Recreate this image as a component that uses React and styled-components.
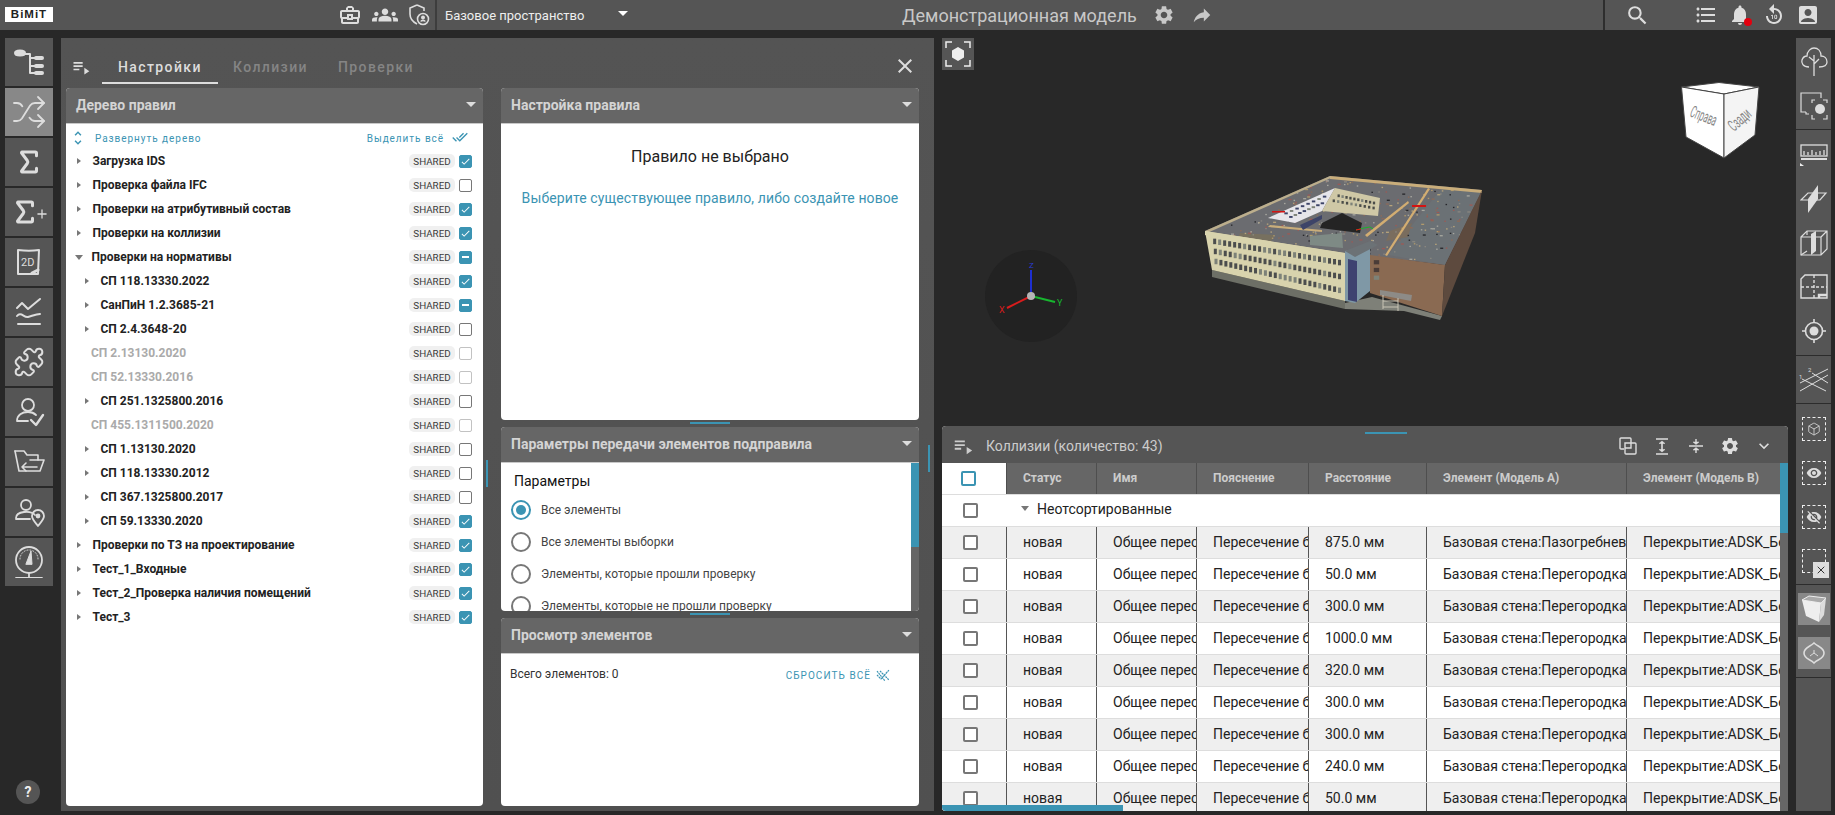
import React from 'react'
import styled, { createGlobalStyle } from 'styled-components'
import {
	MdAccountBox,
	MdCheck,
	MdClose,
	MdDoneAll,
	MdExpandMore,
	MdFormatListBulleted,
	MdGroups,
	MdNotifications,
	MdOutlineBusinessCenter,
	MdPlaylistPlay,
	MdReplay10,
	MdReply,
	MdSearch,
	MdSettings,
	MdUnfoldMore,
	MdVisibility,
	MdVisibilityOff,
} from 'react-icons/md'
import { Box, Puzzle, Shuffle, Sigma, Plus, X } from 'lucide-react'

const BLUE = '#3b94b3'

const GlobalStyle = createGlobalStyle`
	html, body {
		margin: 0;
		height: 100%;
		background: #282828;
		overflow: hidden;
	}
	body {
		font-family: Roboto, "Noto Sans", sans-serif;
	}
	* {
		box-sizing: border-box;
	}
`

const Page = styled.div`
	width: 1835px;
	height: 815px;
	display: flex;
	flex-direction: column;
	background: #282828;
`

const TopBar = styled.header`
	height: 30px;
	flex: none;
	display: flex;
	background: #555;
	color: #ddd;
`

const LogoSection = styled.div`
	width: 435px;
	display: flex;
	align-items: center;
	padding: 0 5px;
`

const Logo = styled.div`
	width: 48px;
	height: 15px;
	margin-top: -2px;
	background: #fff;
	color: #222;
	font: bold 11.5px/15px 'Liberation Sans', sans-serif;
	letter-spacing: 1px;
	text-align: center;
`

const TopIcons = styled.div`
	display: flex;
	align-items: center;
	margin-left: auto;
	gap: 10px;
	color: #ddd;
`

const SelectBox = styled.div`
	width: 198px;
	border-left: 2px solid #3d3d3d;
	padding: 0 5px 0 8px;
	display: flex;
	align-items: center;
	justify-content: space-between;
	font-size: 13px;
	color: #eee;
`

const Caret = styled.span`
	width: 0;
	height: 0;
	border-left: 5px solid transparent;
	border-right: 5px solid transparent;
	border-top: 5px solid ${(p) => p.$color || '#ddd'};
	margin-top: ${(p) => p.$top || 0}px;
`

const TitleSection = styled.div`
	flex: 1;
	display: flex;
	align-items: center;
	padding-left: 269px;
	font-size: 18px;
	color: #c8c8c8;
	gap: 16px;
	border-right: 2px solid #2e2e2e;
`

const RightSection = styled.div`
	width: 230px;
	padding: 0 15px 0 20px;
	display: flex;
	align-items: center;
`

const FlipReply = styled(MdReply)`
	transform: scaleX(-1);
`

const BellWrap = styled.div`
	position: relative;
	display: flex;
`

const Dot = styled.span`
	position: absolute;
	right: 0;
	bottom: 1px;
	width: 8px;
	height: 8px;
	border-radius: 50%;
	background: #e3000f;
`

const Body = styled.div`
	flex: 1;
	min-height: 0;
	display: flex;
	padding: 8px 4px 4px 5px;
`

const LeftRail = styled.nav`
	width: 48px;
	flex: none;
	display: flex;
	flex-direction: column;
	gap: 2px;
	margin-right: 8px;
	position: relative;
`

const RailButton = styled.div`
	width: 48px;
	height: 48px;
	display: flex;
	align-items: center;
	justify-content: center;
	background: ${(p) => (p.$active ? '#888' : '#555')};
	color: #ddd;
`

const HelpButton = styled.div`
	margin: auto 0 7px 11px;
	width: 24px;
	height: 24px;
	border-radius: 50%;
	background: #555;
	color: #eee;
	font-size: 14px;
	font-weight: 700;
	line-height: 24px;
	text-align: center;
`

const MainPanel = styled.section`
	width: 873px;
	flex: none;
	height: 773px;
	display: flex;
	flex-direction: column;
	background: linear-gradient(#545454, #505050);
	position: relative;
`

const TabBar = styled.div`
	height: 50px;
	flex: none;
	display: flex;
	align-items: flex-start;
	padding: 13px 17px 0 9px;
	color: #ddd;
`

const Tab = styled.div`
	height: 33px;
	padding: 8px ${(p) => (p.$active ? 16 : 15)}px 0;
	font-size: 14px;
	font-weight: 500;
	letter-spacing: 1.4px;
	color: ${(p) => (p.$active ? '#ddd' : '#858585')};
	border-bottom: 2px solid ${(p) => (p.$active ? '#ddd' : 'transparent')};
`

const TabIcon = styled.div`
	width: 32px;
	padding: 6px 0 0 1px;
	display: flex;
`

const CloseIcon = styled.div`
	margin-left: auto;
	padding-top: 3px;
	display: flex;
`

const Columns = styled.div`
	flex: 1;
	min-height: 0;
	display: flex;
	gap: 18px;
	padding: 0 15px 5px 5px;
`

const Column = styled.div`
	width: ${(p) => p.$width}px;
	display: flex;
	flex-direction: column;
	gap: 7px;
`

const Card = styled.div`
	height: ${(p) => (p.$height ? `${p.$height}px` : '100%')};
	flex: none;
	display: flex;
	flex-direction: column;
	position: relative;
	background: #fff;
	border-radius: 4px;
`

const CardHeader = styled.div`
	height: 36px;
	flex: none;
	display: flex;
	align-items: center;
	justify-content: space-between;
	padding: 0 7px 2px 10px;
	background: #666;
	border-bottom: 1px solid #c8c8c8;
	border-radius: 4px 4px 0 0;
	color: #d4d4d4;
	font-size: 14px;
	font-weight: 700;
`

const CardBody = styled.div`
	flex: 1;
	min-height: 0;
	overflow: hidden;
	position: relative;
	border-radius: 0 0 4px 4px;
`

const HandleH = styled.div`
	position: absolute;
	left: ${(p) => p.$left}px;
	${(p) => (p.$bottom !== undefined ? `bottom: ${p.$bottom}px;` : `top: ${p.$top}px;`)}
	width: ${(p) => p.$width || 40}px;
	height: 2px;
	background: ${BLUE};
`

const HandleV = styled.div`
	position: absolute;
	left: ${(p) => p.$left}px;
	top: ${(p) => p.$top}px;
	width: 1.5px;
	height: 27px;
	background: ${BLUE};
`

const TreeToolbar = styled.div`
	height: 22px;
	margin-top: 3px;
	display: flex;
	align-items: center;
	padding: 0 15px 0 3px;
	color: ${BLUE};
	font-size: 10px;
	letter-spacing: 0.95px;
`

const ToolLabel = styled.span`
	margin-left: ${(p) => p.$left || 0}px;
`

const Spacer = styled.span`
	flex: 1;
`

const TreeRow = styled.div`
	height: 24px;
	display: flex;
	align-items: center;
	padding-right: 11px;
	padding-left: ${(p) => (p.$level ? 18 : 10)}px;
`

const Arrow = styled.span`
	width: 0;
	height: 0;
	margin-right: 11px;
	margin-left: 1px;
	${(p) =>
		p.$open
			? `border-left: 4.5px solid transparent; border-right: 4.5px solid transparent; border-top: 5px solid #777; margin-left: -1px; margin-right: 8px;`
			: `border-top: 3.5px solid transparent; border-bottom: 3.5px solid transparent; border-left: 4px solid #777;`}
`

const TreeLabel = styled.span`
	font-size: 12px;
	font-weight: 700;
	color: ${(p) => (p.$disabled ? '#aaa' : '#222')};
	margin-left: ${(p) => (p.$disabled ? 7 : 0.5)}px;
`

const SharedChip = styled.span`
	width: 46px;
	height: 14px;
	margin-left: auto;
	margin-right: 4px;
	background: #f0f0f0;
	border-radius: 5px;
	color: #3a3a3a;
	font-size: 9.8px;
	line-height: 15px;
	text-align: center;
`

const CheckBox = styled.span`
	width: ${(p) => p.$size || 13}px;
	height: ${(p) => p.$size || 13}px;
	flex: none;
	display: inline-flex;
	align-items: center;
	justify-content: center;
	border-radius: 2px;
	color: #fff;
	background: ${(p) => (p.$state ? BLUE : '#fff')};
	border: ${(p) => p.$border || 1.5}px solid
		${(p) => {
			if (p.$state || p.$blue) return BLUE
			return p.$disabled ? '#c2c2c2' : '#777'
		}};
`

const MinusBar = styled.span`
	width: 7px;
	height: 1.5px;
	background: #fff;
`

const EmptyTitle = styled.div`
	margin-top: 23px;
	text-align: center;
	font-size: 16px;
	color: #222;
`

const EmptyHint = styled.div`
	margin-top: 24px;
	text-align: center;
	font-size: 14px;
	letter-spacing: 0.11px;
	color: ${BLUE};
`

const Scrollbar = styled.div`
	position: absolute;
	top: 0;
	right: 0;
	bottom: 0;
	width: 8px;
	background: #666;
`

const ScrollThumb = styled.div`
	height: ${(p) => p.$height}px;
	background: ${BLUE};
`

const ParamsTitle = styled.div`
	padding: 10px 0 0 13px;
	font-size: 14px;
	color: #111;
	height: 31px;
`

const RadioRow = styled.div`
	height: 32px;
	display: flex;
	align-items: center;
	padding-left: 10px;
	font-size: 12px;
	color: #444;
	gap: 10px;
`

const Radio = styled.span`
	width: 20px;
	height: 20px;
	flex: none;
	display: flex;
	align-items: center;
	justify-content: center;
	border-radius: 50%;
	border: 2px solid ${(p) => (p.$checked ? BLUE : '#777')};
	&::after {
		content: '';
		width: 10px;
		height: 10px;
		border-radius: 50%;
		background: ${(p) => (p.$checked ? BLUE : 'transparent')};
	}
`

const TotalRow = styled.div`
	display: flex;
	align-items: center;
	justify-content: space-between;
	padding: 12px 28px 0 9px;
	font-size: 12px;
	color: #333;
`

const ResetButton = styled.div`
	display: flex;
	align-items: center;
	gap: 5px;
	margin-top: 2px;
	color: ${BLUE};
	font-size: 10px;
	letter-spacing: 1.05px;
`

const Workspace = styled.div`
	flex: 1;
	min-width: 0;
	display: flex;
	flex-direction: column;
	padding: 0 8px;
`

const Viewport = styled.div`
	height: 388px;
	flex: none;
	position: relative;
`

const FitButton = styled.div`
	position: absolute;
	left: 0;
	top: 0;
	width: 32px;
	height: 32px;
	background: #555;
	display: flex;
	align-items: center;
	justify-content: center;
`

const Drawing = styled.svg`
	position: absolute;
	left: ${(p) => p.$x}px;
	top: ${(p) => p.$y}px;
`

const TablePanel = styled.section`
	height: 385px;
	flex: none;
	width: 846px;
	display: flex;
	flex-direction: column;
	position: relative;
	overflow: hidden;
	border-radius: 4px 4px 0 4px;
	background: #fff;
`

const TableHeader = styled.div`
	height: 37px;
	flex: none;
	display: flex;
	align-items: center;
	padding: 3px 7px 0 10px;
	background: #555;
	color: #ccc;
	font-size: 14px;
	gap: 6px;
`

const HeaderIcons = styled.div`
	margin-left: auto;
	display: flex;
	align-items: center;
	color: #ddd;
`

const IconSlot = styled.div`
	width: 34px;
	display: flex;
	justify-content: center;
`

const GridRow = styled.div`
	height: ${(p) => p.$height || 32}px;
	flex: none;
	display: grid;
	grid-template-columns: 64px 90px 100px 112px 118px 200px 154px;
	width: 838px;
	border-bottom: 1px solid #ddd;
	background: ${(p) => (p.$shade ? '#efefef' : '#fff')};
`

const CheckCell = styled.div`
	display: flex;
	align-items: center;
	padding-left: ${(p) => p.$left || 21}px;
	background: ${(p) => (p.$shade ? '#efefef' : '#fff')};
`

const HeadCell = styled.div`
	background: #666;
	color: #ccc;
	font-size: 12px;
	font-weight: 700;
	line-height: 31px;
	padding-left: 16px;
	border-left: 1px solid #4e4e4e;
	white-space: nowrap;
	overflow: hidden;
`

const Cell = styled.div`
	font-size: 14px;
	line-height: 30px;
	color: #222;
	padding-left: 16px;
	border-left: 1px solid #555;
	white-space: nowrap;
	overflow: hidden;
`

const GroupCell = styled.div`
	grid-column: 2 / -1;
	display: flex;
	align-items: center;
	padding: 0 0 4px 16px;
	font-size: 14px;
	color: #222;
`

const TableScrollV = styled.div`
	position: absolute;
	top: 37px;
	right: 0;
	bottom: 0;
	width: 8px;
	background: #666;
`

const TableScrollH = styled.div`
	position: absolute;
	left: 0;
	bottom: 0;
	width: 181px;
	height: 6px;
	background: ${BLUE};
`

const RightRail = styled.aside`
	width: 35px;
	flex: none;
	height: 773px;
	display: flex;
	flex-direction: column;
	gap: 1px;
	background: #2c2c2c;
`

const RailGroup = styled.div`
	height: ${(p) => p.$height}px;
	flex: ${(p) => (p.$grow ? 1 : 'none')};
	background: #555;
	display: flex;
	flex-direction: column;
	align-items: center;
	padding-top: ${(p) => p.$top || 0}px;
	gap: ${(p) => p.$gap || 0}px;
	color: #ddd;
`

const RailIcon = styled.div`
	width: 32px;
	height: ${(p) => p.$height || 44}px;
	flex: none;
	display: flex;
	align-items: center;
	justify-content: center;
	position: relative;
	background: ${(p) => (p.$active ? '#888' : 'transparent')};
`

const DashedBox = styled.div`
	width: 24px;
	height: 24px;
	border: 1px dashed #eee;
	display: flex;
	align-items: center;
	justify-content: center;
`

const CornerX = styled.div`
	position: absolute;
	right: 1px;
	bottom: 5px;
	width: 16px;
	height: 16px;
	background: #ddd;
	color: #333;
	display: flex;
	align-items: center;
	justify-content: center;
`

const PlusIcon = styled(Plus)`
	margin-left: -5px;
	margin-top: 3px;
`

const TREE = [
	{ name: 'Загрузка IDS', check: 'on' },
	{ name: 'Проверка файла IFC' },
	{ name: 'Проверки на атрибутивный состав', check: 'on' },
	{ name: 'Проверки на коллизии', check: 'on' },
	{ name: 'Проверки на нормативы', check: 'mixed', open: true },
	{ name: 'СП 118.13330.2022', check: 'on', level: 1 },
	{ name: 'СанПиН 1.2.3685-21', check: 'mixed', level: 1 },
	{ name: 'СП 2.4.3648-20', level: 1 },
	{ name: 'СП 2.13130.2020', level: 1, disabled: true },
	{ name: 'СП 52.13330.2016', level: 1, disabled: true },
	{ name: 'СП 251.1325800.2016', level: 1 },
	{ name: 'СП 455.1311500.2020', level: 1, disabled: true },
	{ name: 'СП 1.13130.2020', level: 1 },
	{ name: 'СП 118.13330.2012', level: 1 },
	{ name: 'СП 367.1325800.2017', level: 1 },
	{ name: 'СП 59.13330.2020', check: 'on', level: 1 },
	{ name: 'Проверки по ТЗ на проектирование', check: 'on' },
	{ name: 'Тест_1_Входные', check: 'on' },
	{ name: 'Тест_2_Проверка наличия помещений', check: 'on' },
	{ name: 'Тест_3', check: 'on' },
]

const RADIOS = [
	'Все элементы',
	'Все элементы выборки',
	'Элементы, которые прошли проверку',
	'Элементы, которые не прошли проверку',
]

const DISTANCES = ['875.0', '50.0', '300.0', '1000.0', '320.0', '300.0', '300.0', '240.0', '50.0']

const COLUMNS = ['Статус', 'Имя', 'Пояснение', 'Расстояние', 'Элемент (Модель А)', 'Элемент (Модель В)']

const Stroke = ({ size = 32, view = 32, width = 2, children }) => (
	<svg
		width={size}
		height={size}
		viewBox={`0 0 ${view} ${view}`}
		fill='none'
		stroke='currentColor'
		strokeWidth={width}
		strokeLinecap='round'
		strokeLinejoin='round'>
		{children}
	</svg>
)

const ShieldUserIcon = () => (
	<svg width='22' height='24' viewBox='0 0 22 24' fill='none' stroke='#ddd' strokeWidth='1.6'>
		<path d='M9 2 L2 5 V11 C2 16 5 19 9 21' />
		<path d='M9 2 L16 5 V8' />
		<circle cx='15' cy='16' r='5.5' />
		<circle cx='15' cy='14.5' r='1.2' fill='#ddd' />
		<path d='M12.8 18.5 C13.5 17 16.5 17 17.2 18.5' />
	</svg>
)

const TreeIcon = () => (
	<Stroke>
		<ellipse cx='7' cy='7' rx='5' ry='2.5' fill='currentColor' />
		<path d='M11 8 H17 V27 M17 12 H22 M17 20 H22 M17 27 H22' />
		<path d='M23 12 H29 M23 20 H29 M23 27 H29' strokeWidth='4' />
	</Stroke>
)

const PlanIcon = () => (
	<Stroke>
		<path d='M5 4 C12 5 20 5 26 4 L25 28 H5 Z' />
		<path d='M19 27 L25 24' strokeWidth='3' />
		<text
			x='8'
			y='20'
			fontSize='11'
			fontFamily='Roboto'
			fill='currentColor'
			stroke='none'>
			2D
		</text>
	</Stroke>
)

const TrendIcon = () => (
	<Stroke>
		<path d='M4 12 L9 7 L15 13 L27 3' />
		<path d='M4 20 C8 15 11 22 15 21 C19 20 23 18 27 18' />
		<path d='M5 28 H27' />
	</Stroke>
)

const UserCheckIcon = () => (
	<Stroke width={1.8}>
		<circle cx='15' cy='9' r='6' />
		<path d='M4 25 C4 19 9 16 15 16 C18 16 21 17 23 19 M4 25 H15' />
		<path d='M18 24 L23 29 L30 19' strokeWidth='2.4' />
	</Stroke>
)

const FolderBackIcon = () => (
	<Stroke width={1.6}>
		<path d='M2 5 H11 L14 9 H25 V14' />
		<path d='M2 5 L6 25 H27 L31 14 H17' />
		<path d='M13 17 L9 21 L13 25 M9 21 H24' />
	</Stroke>
)

const UserPinIcon = () => (
	<Stroke width={1.8}>
		<circle cx='13' cy='9' r='5' />
		<path d='M3 22 C3 15 18 14 22 19 M3 23 H17' />
		<path d='M25 30 C21 25 19 23 19 20 A6 6 0 0 1 31 20 C31 23 29 25 25 30 Z' />
		<circle cx='25' cy='20' r='1.5' fill='currentColor' />
	</Stroke>
)

const GaugeIcon = () => (
	<Stroke width={1.8}>
		<circle cx='16' cy='14' r='13' />
		<path d='M16 27 V31 M3 32 H29' />
		<path d='M13 18 L18 5 L19 18 Z' fill='currentColor' strokeWidth='1' />
		<path d='M7 13 A9 9 0 0 1 25 13' strokeWidth='1' strokeDasharray='1 2' />
	</Stroke>
)

const SigmaPlus = () => (
	<>
		<Sigma size={30} strokeWidth={2.4} />
		<PlusIcon size={14} strokeWidth={2.2} />
	</>
)

const RAIL = [
	{ icon: <TreeIcon /> },
	{ icon: <Shuffle size={36} strokeWidth={1.2} />, active: true },
	{ icon: <Sigma size={30} strokeWidth={2.4} /> },
	{ icon: <SigmaPlus /> },
	{ icon: <PlanIcon /> },
	{ icon: <TrendIcon /> },
	{ icon: <Puzzle size={32} strokeWidth={1.5} /> },
	{ icon: <UserCheckIcon /> },
	{ icon: <FolderBackIcon /> },
	{ icon: <UserPinIcon /> },
	{ icon: <GaugeIcon /> },
]

const FitIcon = ({ size = 26 }) => (
	<svg width={size} height={size} viewBox='0 0 26 26' fill='none' stroke='#eee' strokeWidth='1.5'>
		<path d='M1 7 V1 H7 M19 1 H25 V7 M25 19 V25 H19 M7 25 H1 V19' />
		<polygon points='13,6 19,9.5 19,16.5 13,20 7,16.5 7,9.5' fill='#eee' stroke='none' />
	</svg>
)

const lerp = (a, b, t) => a + (b - a) * t

// pseudo random so that the noise on the model is the same on every render
const rnd = (i) => {
	const x = Math.sin(i * 12.9898) * 43758.5453
	return x - Math.floor(x)
}

const insidePoly = (x, y, poly) => {
	let inside = false
	for (let i = 0, j = poly.length - 1; i < poly.length; j = i++) {
		const [xi, yi] = poly[i]
		const [xj, yj] = poly[j]
		if (yi > y !== yj > y && x < ((xj - xi) * (y - yi)) / (yj - yi) + xi) inside = !inside
	}
	return inside
}

const windowRows = (tl, tr, bl, br, rows, cols, color) => {
	const out = []
	for (let r = 0; r < rows; r++) {
		for (let c = 0; c < cols; c++) {
			const u = (c + 0.2) / cols
			const v = (r + 0.25) / rows
			const x = lerp(lerp(tl[0], tr[0], u), lerp(bl[0], br[0], u), v)
			const y = lerp(lerp(tl[1], tr[1], u), lerp(bl[1], br[1], u), v)
			out.push(
				<rect
					key={`${r}-${c}-${x}`}
					x={x}
					y={y}
					width={0.6 * ((tr[0] - tl[0]) / cols)}
					height={0.55 * ((bl[1] - tl[1]) / rows)}
					fill={rnd(r * 40 + c) > 0.6 ? '#7d8278' : color}
				/>,
			)
		}
	}
	return out
}

const ROOF = [
	[7, 58],
	[130, 5],
	[280, 19],
	[245, 90],
	[145, 78],
]

const COURT = [
	[122, 50],
	[142, 40],
	[162, 50],
	[160, 60],
	[120, 55],
]

const SPECK_COLORS = ['#9c5a55', '#8a8780', '#b09a6c', '#8d6a58', '#26262a', '#a8a8a0', '#b8a47a']

const ROOF_SPECKS = Array.from({ length: 520 }, (_, i) => ({
	x: rnd(i) * 290,
	y: rnd(i + 1500) * 100,
	c: SPECK_COLORS[i % SPECK_COLORS.length],
})).filter((s) => insidePoly(s.x, s.y, ROOF) && !insidePoly(s.x, s.y, COURT))

const BuildingModel = () => (
	<Drawing $x={258} $y={135} width='292' height='152' viewBox='0 0 292 152'>
		{/* base */}
		<polygon points='12,97 145,128 145,136 12,104' fill='#6d6f66' />
		<polygon points='145,130 172,124 242,143 240,147 204,138 145,136' fill='#7e8078' />
		{/* roof */}
		<polygon points='5,58 130,3 282,17 245,92 145,80' fill='#6b6c70' />
		<polygon points='188,82 245,92 282,18 242,15' fill='#6b7175' />
		<polygon points='40,60 75,62 70,70 38,66' fill='#77705f' />
		<polygon points='190,58 212,50 208,64 186,68' fill='#7a6d5e' />
		{/* roof details */}
		{ROOF_SPECKS.map((s, i) => (
			<rect key={i} x={s.x} y={s.y} width={i % 4 === 0 ? 3 : 1.5} height='1.3' fill={s.c} />
		))}
		<polygon points='130,3 282,17 282,20 130,6' fill='#c9ad7a' />
		<polygon points='5,58 130,3 131,5 7,60' fill='#bcae8c' />
		<polygon points='5,58 145,80 145,84 5,62' fill='#e0d9b6' />
		<polygon points='185,82 228,15 230,16 187,83' fill='#d2ad72' />
		<polygon points='165,62 208,28 209,30 167,64' fill='#d2ad72' />
		<polygon points='70,52 122,57 122,59 68,54' fill='#c9ad7a' />
		{/* inner walls and courtyard */}
		<polygon points='68,45 135,15 122,38 95,50' fill='#e6e5ea' />
		{windowRows([82, 39], [128, 19], [92, 46], [122, 33], 2, 8, '#3d4468')}
		<polygon points='100,52 122,42 122,46 103,57' fill='#3d4468' />
		<polygon points='135,15 180,25 178,43 122,38' fill='#cfc8a6' />
		{windowRows([138, 20], [176, 28], [128, 30], [176, 38], 2, 10, '#4a4c48')}
		<polygon points='122,50 142,40 162,50 160,60 120,55' fill='#242424' />
		<path d='M156 57 L164 55 M164 55 L170 54 L173 56' stroke='#18b52c' strokeWidth='1' fill='none' />
		<path d='M156 57 L161 56' stroke='#e11' strokeWidth='1' fill='none' />
		<polygon points='110,63 142,60 143,75 110,72' fill='#7e8a85' />
		<rect x='72' y='38' width='13' height='1.5' fill='#d31313' />
		<rect x='212' y='32' width='14' height='2' fill='#d31313' />
		{/* front facade */}
		<polygon points='5,58 145,80 145,128 12,97' fill='#d8d3ad' />
		{windowRows([12, 63], [142, 84], [14, 93], [142, 126], 3, 26, '#4b4d4d')}
		{/* stair tower */}
		<polygon points='145,78 170,72 170,118 155,130 145,128' fill='#7f98a6' />
		<polygon points='148,86 157,88 157,129 148,127' fill='#3e4270' />
		<polygon points='145,78 170,68 178,72 155,84' fill='#6c7276' />
		{/* brick wing */}
		<polygon points='170,82 245,92 242,143 170,120' fill='#8a6a52' />
		{windowRows([172, 85], [181, 86], [172, 108], [181, 110], 3, 1, '#4a3c38')}
		<polygon points='180,117 212,122 211,128 180,122' fill='#8d8b87' />
		<path d='M183 122 V136 M198 125 V138 M183 128 H198 M183 134 H198' stroke='#c8c4b4' strokeWidth='1' />
		<polygon points='245,92 282,17 275,60 242,143' fill='#5d4a3e' />
	</Drawing>
)

const AxisGizmo = () => (
	<Drawing $x={43} $y={212} width='92' height='92' viewBox='0 0 92 92'>
		<circle cx='46' cy='46' r='46' fill='#222' />
		<path d='M46 46 V20' stroke='#1e2fd0' strokeWidth='2' />
		<path d='M46 46 L22 58' stroke='#d91c1c' strokeWidth='2' />
		<path d='M46 46 L70 52' stroke='#17b52f' strokeWidth='2' />
		<circle cx='46' cy='46' r='4' fill='#b5b5b5' />
		<text x='44' y='18' fontSize='8' fill='#2a3bd8' fontFamily='Roboto'>Z</text>
		<text x='14' y='63' fontSize='9' fill='#d91c1c' fontFamily='Roboto'>X</text>
		<text x='72' y='56' fontSize='9' fill='#17b52f' fontFamily='Roboto'>Y</text>
	</Drawing>
)

const ViewCube = () => (
	<Drawing $x={739} $y={44} width='80' height='80' viewBox='0 0 80 80'>
		<polygon points='0.5,5 43,12 78,5 38,0.5' fill='#fff' stroke='#444' strokeWidth='1' />
		<polygon points='0.5,5 43,12 43,76 5,55' fill='#fff' stroke='#444' strokeWidth='1' />
		<polygon points='43,12 78,5 74,53 43,76' fill='#f4f4f4' stroke='#444' strokeWidth='1' />
		<text
			x='0'
			y='0'
			fontSize='11'
			fill='#888'
			fontFamily='Roboto'
			transform='translate(8 34) rotate(22) scale(0.72 1.5)'>
			Справа
		</text>
		<text
			x='0'
			y='0'
			fontSize='11'
			fill='#888'
			fontFamily='Roboto'
			transform='translate(53 50) rotate(-42) scale(0.78 1.5)'>
			Сзади
		</text>
	</Drawing>
)

const RailTreeIcon = () => (
	<svg width='28' height='30' viewBox='0 0 28 30' fill='none' stroke='#ddd' strokeWidth='1.3'>
		<path d='M9 20 C3 20 1 16 2 13 C3 10 5 9 7 9 C7 4 11 1 14 1 C18 1 21 4 21 9 C24 9 27 11 27 15 C27 18 24 20 19 20' />
		<path d='M14 8 V29 M14 14 L9 10 M14 17 L19 12' />
	</svg>
)

const SnapshotIcon = () => (
	<svg width='28' height='28' viewBox='0 0 28 28' fill='none' stroke='#ddd' strokeWidth='1.2'>
		<path d='M6 20 H1 V1 H21 V6' />
		<path d='M6 20 V22 H9' />
		<path d='M12 11 V8 H15 M23 8 H27 V11 M27 23 V27 H23 M15 27 H12 V23' />
		<circle cx='20' cy='17' r='5' fill='#ddd' stroke='none' />
	</svg>
)

const RulerIcon = () => (
	<svg width='28' height='22' viewBox='0 0 28 22' fill='none' stroke='#ddd' strokeWidth='1.3'>
		<rect x='1' y='1' width='26' height='11' />
		<path d='M4 11 V7 M8 11 V8 M12 11 V6 M16 11 V8 M20 11 V7 M24 11 V6' />
		<path d='M1 15 H27' strokeWidth='2' />
		<polygon points='0,19 4,22 0,22' fill='#eee' stroke='none' />
	</svg>
)

const PlaneIcon = () => (
	<svg width='28' height='30' viewBox='0 0 28 30' fill='none' stroke='#ddd' strokeWidth='1.2'>
		<polygon points='18,1 18,15 8,15' fill='#ddd' stroke='none' />
		<polygon points='8,15 18,15 8,29' fill='#ddd' stroke='none' />
		<path d='M1 16 L8 9 H26 L20 16 Z' />
	</svg>
)

const SectionBoxIcon = () => (
	<svg width='28' height='26' viewBox='0 0 28 26' fill='none' stroke='#ddd' strokeWidth='1.2'>
		<path d='M1 7 L7 1 H27 V19 L21 25 H1 Z M1 7 H21 V25 M21 7 L27 1' />
		<path d='M7 1 V5 M7 21 L1 25' />
		<polygon points='11,4 16,1 16,21 11,25' fill='#ddd' stroke='none' />
	</svg>
)

const FloorIcon = () => (
	<svg width='28' height='26' viewBox='0 0 28 26' fill='none' stroke='#ddd' strokeWidth='1.4'>
		<path d='M1 5 L5 1 H27 V24 H1 Z' />
		<path d='M14 1 V24 M1 13 H27' strokeDasharray='3 2' />
		<path d='M19 24 V21 H27' strokeWidth='2.4' />
	</svg>
)

const TargetIcon = () => (
	<svg width='24' height='24' viewBox='0 0 24 24' fill='none' stroke='#ddd' strokeWidth='1.6'>
		<circle cx='12' cy='12' r='8.5' />
		<circle cx='12' cy='12' r='4.5' fill='#ddd' stroke='none' />
		<path d='M12 0 V3 M12 21 V24 M0 12 H3 M21 12 H24' />
	</svg>
)

const GridIcon = () => (
	<svg width='32' height='30' viewBox='0 0 32 30' fill='none' stroke='#ddd' strokeWidth='1'>
		<path d='M2 26 L30 10 M2 18 L30 4 M4 14 L28 26 M14 8 L30 18' />
		<text x='1' y='14' fontSize='6' fill='#ddd' stroke='none' fontFamily='Roboto'>1</text>
		<text x='10' y='7' fontSize='6' fill='#ddd' stroke='none' fontFamily='Roboto'>2</text>
	</svg>
)

const SolidCubeIcon = () => (
	<svg width='26' height='28' viewBox='0 0 26 28' fill='none'>
		<polygon points='1,5 8,1 25,3 20,8' fill='#aaa' stroke='#eee' strokeWidth='1' />
		<polygon points='1,5 20,8 18,27 5,21' fill='#eee' />
		<polygon points='20,8 25,3 23,20 18,27' fill='#ddd' />
	</svg>
)

const OrbitIcon = () => (
	<svg width='24' height='24' viewBox='0 0 24 24' fill='none' stroke='#ddd' strokeWidth='1.6'>
		<path d='M2 12 C2 6 8 6 12 2 C16 6 22 6 22 12 C22 18 16 18 12 22 C8 18 2 18 2 12 Z' />
		<path d='M12 12 V9 M12 12 L8 15 M12 12 L16 15' strokeWidth='1' />
	</svg>
)

const SwapIcon = () => (
	<svg width='18' height='18' viewBox='0 0 18 18' fill='none' stroke='#ddd' strokeWidth='1.4'>
		<path d='M5 12 H2 Q1 12 1 11 V2 Q1 1 2 1 H11 Q12 1 12 2 V6' />
		<path d='M6 6 H16 Q17 6 17 7 V16 Q17 17 16 17 H7 Q6 17 6 16 Z M6 11 H12 V6' />
	</svg>
)

const CollapseIcon = () => (
	<svg width='16' height='16' viewBox='0 0 16 16' fill='#ddd' stroke='#ddd'>
		<path d='M1 8 H15' strokeWidth='1.6' />
		<path d='M8 1 V4 M8 12 V15' strokeWidth='1.4' />
		<path d='M5 4 H11 L8 6.5 Z M5 12 H11 L8 9.5 Z' strokeWidth='0.5' />
	</svg>
)

const ExpandRowsIcon = () => (
	<svg width='16' height='17' viewBox='0 0 16 17' fill='#ddd' stroke='#ddd'>
		<path d='M2 1 H14 M2 16 H14' strokeWidth='1.6' />
		<path d='M8 4 V13' strokeWidth='1.6' />
		<path d='M5 5.5 L8 3 L11 5.5 Z M5 11.5 L8 14 L11 11.5 Z' strokeWidth='0.5' />
	</svg>
)

const ClearAllIcon = () => (
	<svg width='15' height='14' viewBox='0 0 15 14' fill='none' stroke={BLUE} strokeWidth='1.2'>
		<path d='M1 7 L5 11 L13 2 M4 3 L13 12 M1 3 L9 13' strokeDasharray='2 0.6' />
	</svg>
)

const Rule = ({ item }) => (
	<TreeRow $level={item.level}>
		{!item.disabled && <Arrow $open={item.open} />}
		<TreeLabel $disabled={item.disabled}>{item.name}</TreeLabel>
		<SharedChip>SHARED</SharedChip>
		<CheckBox
			$state={item.check}
			$disabled={item.disabled}>
			{item.check === 'on' && <MdCheck size={11} />}
			{item.check === 'mixed' && <MinusBar />}
		</CheckBox>
	</TreeRow>
)

const CollisionRow = ({ distance, index }) => {
	const shade = index % 2 === 0
	return (
		<GridRow $shade={shade}>
			<CheckCell $shade={shade}>
				<CheckBox
					$size={15}
					$border={2}
				/>
			</CheckCell>
			<Cell>новая</Cell>
			<Cell>Общее пересечение</Cell>
			<Cell>Пересечение без допуска</Cell>
			<Cell>{distance} мм</Cell>
			<Cell>{index === 0 ? 'Базовая стена:Пазогребневая' : 'Базовая стена:Перегородка'}</Cell>
			<Cell>Перекрытие:ADSK_Бетон</Cell>
		</GridRow>
	)
}

const App = () => {
	return (
		<Page>
			<GlobalStyle />
			<TopBar>
				<LogoSection>
					<Logo>BiMiT</Logo>
					<TopIcons>
						<MdOutlineBusinessCenter size={24} />
						<MdGroups size={26} />
						<ShieldUserIcon />
					</TopIcons>
				</LogoSection>
				<SelectBox>
					Базовое пространство
					<Caret
						$top={-4}
						$color='#fff'
					/>
				</SelectBox>
				<TitleSection>
					Демонстрационная модель
					<MdSettings size={22} />
					<FlipReply size={22} />
				</TitleSection>
				<RightSection>
					<MdSearch size={25} />
					<TopIcons>
						<MdFormatListBulleted size={24} />
						<BellWrap>
							<MdNotifications size={24} />
							<Dot />
						</BellWrap>
						<MdReplay10 size={24} />
						<MdAccountBox size={24} />
					</TopIcons>
				</RightSection>
			</TopBar>
			<Body>
				<LeftRail>
					{RAIL.map((item, i) => (
						<RailButton
							key={i}
							$active={item.active}>
							{item.icon}
						</RailButton>
					))}
					<HelpButton>?</HelpButton>
				</LeftRail>
				<MainPanel>
					<TabBar>
						<TabIcon>
							<MdPlaylistPlay size={20} />
						</TabIcon>
						<Tab $active>Настройки</Tab>
						<Tab>Коллизии</Tab>
						<Tab>Проверки</Tab>
						<CloseIcon>
							<MdClose size={24} />
						</CloseIcon>
					</TabBar>
					<Columns>
						<Column $width={417}>
							<Card>
								<CardHeader>
									Дерево правил
									<Caret $color='#ddd' />
								</CardHeader>
								<CardBody>
									<TreeToolbar>
										<MdUnfoldMore size={18} />
										<ToolLabel $left={8}>Развернуть дерево</ToolLabel>
										<Spacer />
										Выделить всё
										<ToolLabel $left={8}>
											<MdDoneAll size={16} />
										</ToolLabel>
									</TreeToolbar>
									{TREE.map((item) => (
										<Rule
											key={item.name}
											item={item}
										/>
									))}
								</CardBody>
							</Card>
						</Column>
						<Column $width={418}>
							<Card $height={332}>
								<CardHeader>
									Настройка правила
									<Caret $color='#ddd' />
								</CardHeader>
								<CardBody>
									<EmptyTitle>Правило не выбрано</EmptyTitle>
									<EmptyHint>Выберите существующее правило, либо создайте новое</EmptyHint>
								</CardBody>
								<HandleH
									$left={189}
									$bottom={-4}
								/>
							</Card>
							<Card $height={184}>
								<CardHeader>
									Параметры передачи элементов подправила
									<Caret $color='#ddd' />
								</CardHeader>
								<CardBody>
									<ParamsTitle>Параметры</ParamsTitle>
									{RADIOS.map((label, i) => (
										<RadioRow key={label}>
											<Radio $checked={i === 0} />
											{label}
										</RadioRow>
									))}
									<Scrollbar>
										<ScrollThumb $height={84} />
									</Scrollbar>
								</CardBody>
								<HandleH
									$left={189}
									$bottom={-4}
								/>
							</Card>
							<Card $height={188}>
								<CardHeader>
									Просмотр элементов
									<Caret $color='#ddd' />
								</CardHeader>
								<CardBody>
									<TotalRow>
										Всего элементов: 0
										<ResetButton>
											СБРОСИТЬ ВСЁ
											<ClearAllIcon />
										</ResetButton>
									</TotalRow>
								</CardBody>
							</Card>
						</Column>
					</Columns>
					<HandleV
						$left={425}
						$top={422}
					/>
					<HandleV
						$left={867}
						$top={407}
					/>
				</MainPanel>
				<Workspace>
					<Viewport>
						<FitButton>
							<FitIcon />
						</FitButton>
						<BuildingModel />
						<AxisGizmo />
						<ViewCube />
					</Viewport>
					<TablePanel>
						<TableHeader>
							<MdPlaylistPlay size={22} />
							<ToolLabel $left={6}>Коллизии (количество: 43)</ToolLabel>
							<HeaderIcons>
								<IconSlot>
									<SwapIcon />
								</IconSlot>
								<IconSlot>
									<ExpandRowsIcon />
								</IconSlot>
								<IconSlot>
									<CollapseIcon />
								</IconSlot>
								<IconSlot>
									<MdSettings size={20} />
								</IconSlot>
								<IconSlot>
									<MdExpandMore size={20} />
								</IconSlot>
							</HeaderIcons>
						</TableHeader>
						<HandleH
							$left={423}
							$top={6}
							$width={42}
						/>
						<GridRow>
							<CheckCell $left={19}>
								<CheckBox
									$size={15}
									$border={2}
									$blue
								/>
							</CheckCell>
							{COLUMNS.map((name) => (
								<HeadCell key={name}>{name}</HeadCell>
							))}
						</GridRow>
						<GridRow>
							<CheckCell>
								<CheckBox
									$size={15}
									$border={2}
								/>
							</CheckCell>
							<GroupCell>
								<Arrow $open />
								Неотсортированные
							</GroupCell>
						</GridRow>
						{DISTANCES.map((distance, i) => (
							<CollisionRow
								key={i}
								distance={distance}
								index={i}
							/>
						))}
						<TableScrollV>
							<ScrollThumb $height={70} />
						</TableScrollV>
						<TableScrollH />
					</TablePanel>
				</Workspace>
				<RightRail>
					<RailGroup
						$height={91}
						$top={2}>
						<RailIcon>
							<RailTreeIcon />
						</RailIcon>
						<RailIcon>
							<SnapshotIcon />
						</RailIcon>
					</RailGroup>
					<RailGroup
						$height={225}
						$top={3}>
						<RailIcon>
							<RulerIcon />
						</RailIcon>
						<RailIcon>
							<PlaneIcon />
						</RailIcon>
						<RailIcon>
							<SectionBoxIcon />
						</RailIcon>
						<RailIcon>
							<FloorIcon />
						</RailIcon>
						<RailIcon>
							<TargetIcon />
						</RailIcon>
					</RailGroup>
					<RailGroup $height={47}>
						<RailIcon $height={47}>
							<GridIcon />
						</RailIcon>
					</RailGroup>
					<RailGroup
						$height={180}
						$top={3}>
						<RailIcon>
							<DashedBox>
								<Box
									size={14}
									strokeWidth={1.4}
								/>
							</DashedBox>
						</RailIcon>
						<RailIcon>
							<DashedBox>
								<MdVisibility size={16} />
							</DashedBox>
						</RailIcon>
						<RailIcon>
							<DashedBox>
								<MdVisibilityOff size={16} />
							</DashedBox>
						</RailIcon>
						<RailIcon>
							<DashedBox />
							<CornerX>
								<X size={12} />
							</CornerX>
						</RailIcon>
					</RailGroup>
					<RailGroup
						$height={92}
						$top={8}
						$gap={12}>
						<RailIcon
							$height={32}
							$active>
							<SolidCubeIcon />
						</RailIcon>
						<RailIcon
							$height={32}
							$active>
							<OrbitIcon />
						</RailIcon>
					</RailGroup>
					<RailGroup
						$height={0}
						$grow
					/>
				</RightRail>
			</Body>
		</Page>
	)
}

export default App
